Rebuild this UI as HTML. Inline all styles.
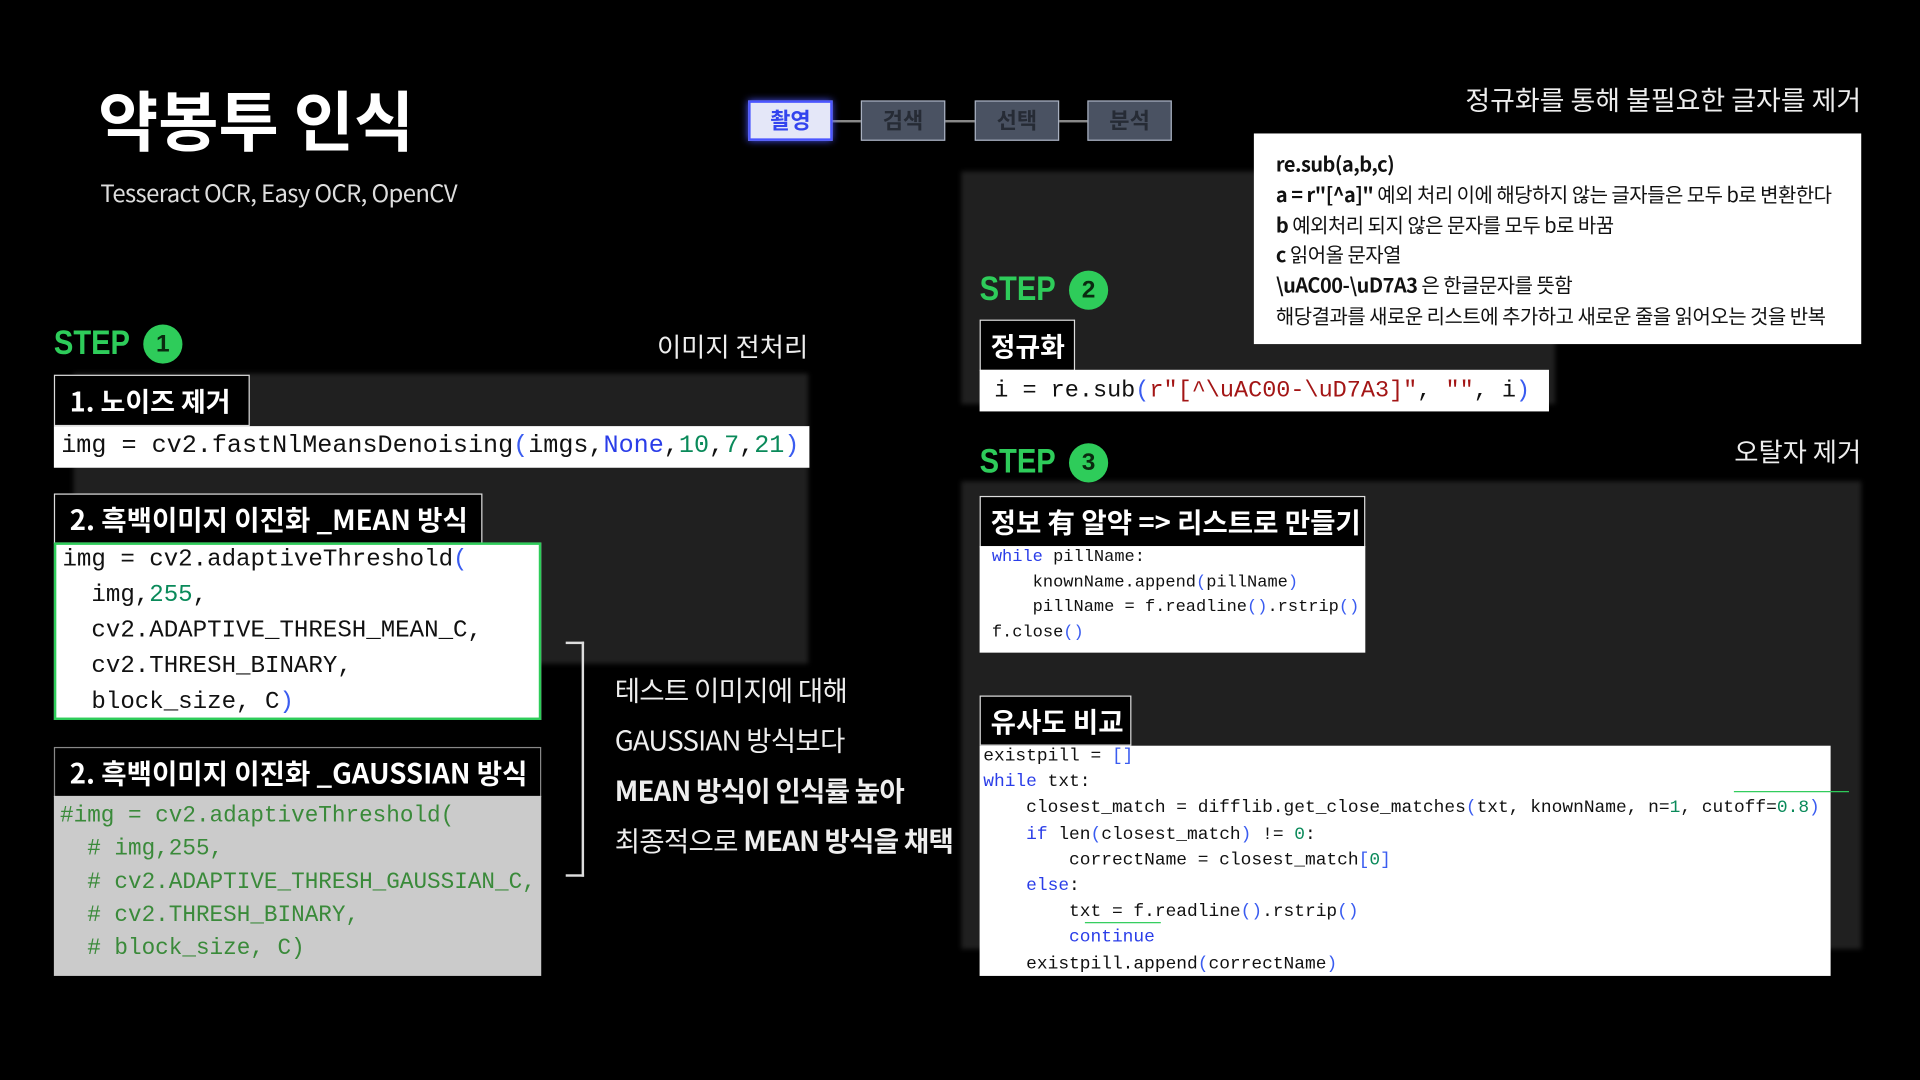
<!DOCTYPE html>
<html><head><meta charset="utf-8">
<style>
html,body{margin:0;padding:0;background:#000;width:1920px;height:1080px;overflow:hidden}
#s{position:absolute;left:0;top:0;width:1568px;height:882px;transform:scale(1.22449);transform-origin:0 0;background:#000;font-family:"Liberation Sans","Noto Sans CJK KR",sans-serif;color:#fff}
.a{position:absolute;white-space:pre}
.m{font-family:"Liberation Mono","DejaVu Sans Mono",monospace;color:#111}
.k{font-family:"Noto Sans CJK KR","Liberation Sans",sans-serif}
.lbl{position:absolute;background:#000;border:1px solid #ddd;font-family:"Noto Sans CJK KR",sans-serif;font-weight:700;color:#fff;box-sizing:border-box;white-space:pre;padding-left:12px}
.wb{position:absolute;background:#fff}
.b{color:#2a3de8}.p{color:#3a5cf0}.n{color:#0a8a5a}.r{color:#a31515}
.step{position:absolute;color:#2ecc5a;font-weight:700;font-size:28px;font-family:"Liberation Sans",sans-serif;transform:scaleX(.85);transform-origin:0 0;letter-spacing:0}
.c{position:absolute;width:32px;height:32px;border-radius:50%;background:#2ecc5a;font-weight:700;font-size:20px;text-align:center;line-height:32px;color:#0a2a10}
.pan{position:absolute;background:#202020;filter:blur(2px)}
.tab{position:absolute;top:82px;height:33px;box-sizing:border-box;border:1px solid #a8b0c0;background:#4a5262;color:#262b35;font-family:"Noto Sans CJK KR",sans-serif;font-weight:700;font-size:18px;text-align:center;line-height:31px}
</style></head><body><div id="s">
<div class="pan" style="left:60px;top:305px;width:600px;height:237px"></div>
<div class="pan" style="left:785px;top:140px;width:485px;height:190px"></div>
<div class="pan" style="left:785px;top:393px;width:735px;height:382px"></div>

<div class="a k" style="left:80px;top:62px;font-size:53.5px;font-weight:700;line-height:70px">약봉투 인식</div>
<div class="a k" style="left:82px;top:142px;font-size:19.5px;color:#ddd;letter-spacing:-0.5px">Tesseract OCR, Easy OCR, OpenCV</div>

<div class="a" style="left:679px;top:98px;width:210px;height:2px;background:#888"></div>
<div class="tab" style="left:611px;width:69px;background:#e4e7f8;border:2px solid #4a55ff;color:#3344ee;box-shadow:0 0 6px #4a55ff;line-height:29px">촬영</div>
<div class="tab" style="left:703px;width:69px">검색</div>
<div class="tab" style="left:796px;width:69px">선택</div>
<div class="tab" style="left:888px;width:69px">분석</div>

<div class="a k" style="right:48px;top:65px;font-size:22px;color:#eee">정규화를 통해 불필요한 글자를 제거</div>
<div class="wb" style="left:1024px;top:109px;width:496px;height:172px"></div>
<div class="a k" style="left:1042px;top:121px;font-size:16.3px;color:#111;line-height:24.8px;letter-spacing:-0.4px"><b>re.sub(a,b,c)</b>
<b>a = r"[^a]"</b> 예외 처리 이에 해당하지 않는 글자들은 모두 b로 변환한다
<b>b</b> 예외처리 되지 않은 문자를 모두 b로 바꿈
<b>c</b> 읽어올 문자열
<b>\uAC00-\uD7A3</b> 은 한글문자를 뜻함
해당결과를 새로운 리스트에 추가하고 새로운 줄을 읽어오는 것을 반복</div>

<div class="step" style="left:44px;top:264px">STEP</div><div class="c" style="left:117px;top:265px">1</div>
<div class="a k" style="right:908px;top:267px;font-size:21.5px;color:#eee">이미지 전처리</div>
<div class="lbl" style="left:44px;top:306px;width:160px;height:42px;font-size:22px;line-height:40px">1. 노이즈 제거</div>
<div class="wb" style="left:44px;top:348px;width:617px;height:34px"></div>
<div class="a m" style="left:50px;top:351px;font-size:20.5px;line-height:28px">img = cv2.fastNlMeansDenoising<span class="p">(</span>imgs,<span class="b">None</span>,<span class="n">10</span>,<span class="n">7</span>,<span class="n">21</span><span class="p">)</span></div>

<div class="lbl" style="left:44px;top:403px;width:350px;height:41px;font-size:22.5px;line-height:40px;padding-left:12px">2. 흑백이미지 이진화 _MEAN 방식</div>
<div class="wb" style="left:44px;top:443px;width:398px;height:145px;border:2px solid #2ecc5a;box-sizing:border-box"></div>
<div class="a m" style="left:51px;top:443px;font-size:19.7px;line-height:29px">img = cv2.adaptiveThreshold<span class="p">(</span>
  img,<span class="n">255</span>,
  cv2.ADAPTIVE_THRESH_MEAN_C,
  cv2.THRESH_BINARY,
  block_size, C<span class="p">)</span></div>

<div class="lbl" style="left:44px;top:610px;width:398px;height:41px;font-size:22.5px;line-height:40px;border-color:#888">2. 흑백이미지 이진화 _GAUSSIAN 방식</div>
<div class="wb" style="left:44px;top:650px;width:398px;height:147px;background:#cbcbcb"></div>
<div class="a m" style="left:49px;top:653px;font-size:18.5px;line-height:27px;color:#3a8a3a">#img = cv2.adaptiveThreshold(
  # img,255,
  # cv2.ADAPTIVE_THRESH_GAUSSIAN_C,
  # cv2.THRESH_BINARY,
  # block_size, C)</div>

<div class="a" style="left:462px;top:524px;width:15px;height:192px;border:2px solid #ddd;border-left:none;box-sizing:border-box"></div>
<div class="a k" style="left:502px;top:543px;font-size:22.5px;line-height:41px;color:#eee;letter-spacing:-0.6px">테스트 이미지에 대해
GAUSSIAN 방식보다
<b>MEAN 방식이 인식률 높아</b>
최종적으로 <b>MEAN 방식을 채택</b></div>

<div class="step" style="left:800px;top:220px">STEP</div><div class="c" style="left:873px;top:221px">2</div>
<div class="lbl" style="left:800px;top:261px;width:78px;height:42px;font-size:22px;line-height:40px;padding-left:8px">정규화</div>
<div class="wb" style="left:800px;top:302px;width:465px;height:34px"></div>
<div class="a m" style="left:812px;top:305px;font-size:19.2px;line-height:28px">i = re.sub<span class="p">(</span><span class="r">r"[^\uAC00-\uD7A3]"</span>, <span class="r">""</span>, i<span class="p">)</span></div>

<div class="step" style="left:800px;top:361px">STEP</div><div class="c" style="left:873px;top:362px">3</div>
<div class="a k" style="right:48px;top:353px;font-size:21.5px;color:#eee">오탈자 제거</div>
<div class="lbl" style="left:800px;top:405px;width:315px;height:42px;font-size:22.5px;line-height:40px;padding-left:8px">정보 有 알약 =&gt; 리스트로 만들기</div>
<div class="wb" style="left:800px;top:446px;width:315px;height:87px"></div>
<div class="a m" style="left:810px;top:445px;font-size:13.9px;line-height:20.5px"><span class="b">while</span> pillName:
    knownName.append<span class="p">(</span>pillName<span class="p">)</span>
    pillName = f.readline<span class="p">()</span>.rstrip<span class="p">()</span>
f.close<span class="p">()</span></div>

<div class="lbl" style="left:800px;top:568px;width:124px;height:41px;font-size:22.5px;line-height:40px;padding-left:8px">유사도 비교</div>
<div class="wb" style="left:800px;top:609px;width:695px;height:188px"></div>
<div class="a m" style="left:803px;top:608px;font-size:14.6px;line-height:21.2px">existpill = <span class="p">[]</span>
<span class="b">while</span> txt:
    closest_match = difflib.get_close_matches<span class="p">(</span>txt, knownName, n=<span class="n">1</span>, cutoff=<span class="n">0.8</span><span class="p">)</span>
    <span class="b">if</span> len<span class="p">(</span>closest_match<span class="p">)</span> != <span class="n">0</span>:
        correctName = closest_match<span class="p">[</span><span class="n">0</span><span class="p">]</span>
    <span class="b">else</span>:
        txt = f.readline<span class="p">()</span>.rstrip<span class="p">()</span>
        <span class="b">continue</span>
    existpill.append<span class="p">(</span>correctName<span class="p">)</span></div>
<div class="a" style="left:1416px;top:646px;width:94px;height:1px;background:#2ecc5a"></div>
<div class="a" style="left:886px;top:753px;width:62px;height:1px;background:#2ecc5a"></div>
</div></body></html>
